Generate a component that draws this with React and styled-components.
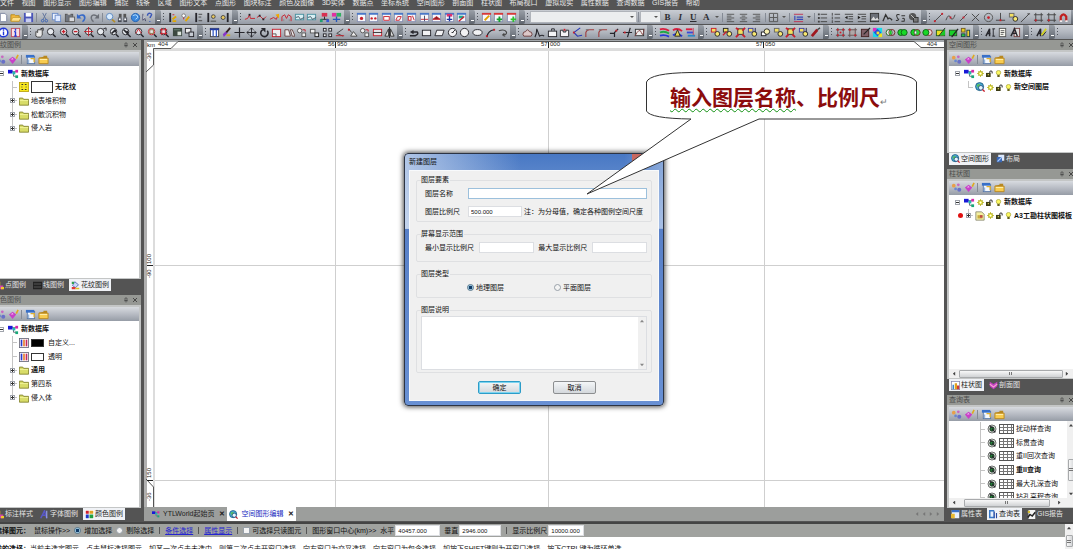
import React from "react";
import styled, { createGlobalStyle, css } from "styled-components";

const GlobalStyle = createGlobalStyle`
  * { box-sizing: border-box; }
  html, body { margin: 0; padding: 0; overflow: hidden; }
  body, button, input, select, textarea, legend {
    font-family: "Liberation Sans", "Noto Sans CJK SC", sans-serif;
    font-size: 7px;
    line-height: 8px;
    color: #111;
  }
  button { border: 0; padding: 0; background: none; }
`;

/* ---------- icons, all drawn on a 12 x 12 grid ---------- */

const K = "#26262c";
const R = "#c8202c";
const L = (d, stroke = K, w = 1, fill = "none") => <path d={d} stroke={stroke} strokeWidth={w} fill={fill} />;
const B = (x, y, w, h, fill, stroke) => <rect x={x} y={y} width={w} height={h} fill={fill} stroke={stroke} />;
const C = (x, y, r, fill, stroke, w = 1) => <circle cx={x} cy={y} r={r} fill={fill} stroke={stroke} strokeWidth={w} />;

const lens = (inner, c = K) => (<>{L("M7.5 8 10.5 11", K, 1.6)}{C(5, 5, 3.5, "#e6e9ee", c)}{inner}</>);
const win = (inner, head = "#4a78c8") => (<>{B(1.5, 1.5, 9, 9, "#f6f7fa", "#8a93b4")}{B(1, 1, 10, 2, head)}{inner}</>);
const shapes = (c) => (<>{B(1.5, 1.5, 5, 4, "#f4e060", c)}{C(8, 7.5, 2.6, "#f8e870", K)}</>);

const ICONS = {
  page: <>{L("M2.5 1.5h5l2 2v7h-7z", "#7c86a0", 1, "#fff")}</>,
  folder: <>{L("M1 3h4l1 1h4v6H1z", "#b98c1e", 1, "#f2b83c")}{L("M1 10 3 6h9l-2 4z", "#b98c1e", 0.6, "#ffe08a")}</>,
  save: <>{B(1, 1, 10, 10, "#4a55b8")}{B(3, 1, 6, 4, "#fff")}{B(3, 7, 6, 4, "#c8cdf0")}</>,
  cut: <>{L("M4 1 7.5 8M8 1 4.5 8", "#60749c")}{C(4, 9.5, 1.4, "none", "#3c64b4")}{C(8, 9.5, 1.4, "none", "#3c64b4")}</>,
  copy: <>{B(1.5, 1.5, 6, 7, "#eef4ff", "#6c8cc8")}{B(4.5, 3.5, 6, 7, "#dce8ff", "#6c8cc8")}</>,
  paste: <>{B(1.5, 2.5, 8, 8, "#707680", "#555")}{B(4, 1, 3, 2, "#ccc")}{B(5.5, 5.5, 6, 5, "#d8dade", "#666")}</>,
  undo: <>{L("M3 5C6 2 10 3 9.500 7 9 9 8 10 7 10.500", "#3468c8", 1.8)}{L("M1 2v5h5z", "none", 0, "#3468c8")}</>,
  redo: <>{L("M9 5C6 2 2 3 2.500 7 3 9 4 10 5 10.500", "#6a6e76", 1.5)}{L("M11 2v5H6z", "none", 0, "#6a6e76")}</>,
  zoom: <>{L("M7.5 8 11 11", "#b48c28", 1.8)}{C(5, 5, 3.5, "#d8ecff", "#5c88c0")}</>,
  binoc: <>{B(2, 2, 3, 4, "#555")}{B(7, 2, 3, 4, "#555")}{B(1, 6, 4, 5, "#4a4e58")}{B(7, 6, 4, 5, "#4a4e58")}{B(2, 7, 2, 2, "#fff")}{B(8, 7, 2, 2, "#fff")}</>,
  globe: <>{C(6, 6, 4.5, "#3c88dc", "#2460b0")}{L("M3 4q3-2 5 0t-2 4", "#bfe4ff")}</>,
  help: <>{L("M1 2v7l2-2 1 3", "#446", 1, "#fff")}{L("M6 4q0-3 3-2.500t0 4v1M8.500 10v1", "#3c58b8", 1.6)}</>,
  barY: <>{L("M3.500 1v10", K, 2)}{L("M6 8 10 5M6 10h4", "#e0a800", 2)}{L("M6 3h2", R)}</>,
  barKey: <>{C(4, 4, 2, "#fff", "#777")}{L("M6 10 10 5", "#e0a800", 2)}{L("M4 6v2", R)}</>,
  barB: <>{L("M3.500 1v10", K, 2)}{L("M6 2.500h4M6 5.500h3M6 9.500h4", "#444")}</>,
  barC: <>{L("M2.500 1v10", K, 2)}{C(8, 5, 2, "#e8c860", "#444")}{L("M5 10h6", "#444")}</>,
  barD: <>{L("M9.500 1v10", K, 2)}{C(4.500, 6, 2.200, "#e8c860", "#444")}</>,
  pl1: <>{L("M1 8 4 7 6 3 7 7h5", R)}{B(5, 2, 2, 2, K)}</>,
  pl2: <>{L("M1 6 4 4 8 8 11 5", R)}{B(3, 3, 2, 2, K)}{B(7, 7, 2, 2, K)}</>,
  plY: <>{L("M1 8 5 6 8 8 10 3", R)}{L("M7 3 11 2v5z", "none", 0, "#f0a800")}</>,
  plM: <>{L("M1 10V5l3-2 2 4 2-4 3 2v5", R)}{L("M3 10V8M9 10V8", "#888")}</>,
  winC: <>{B(1.5, 2.5, 9, 6, "#d8f0f4", "#4890a0")}{L("M2 6 5 5l2 3 4-2", "#456", 1)}</>,
  treeR: <>{B(3, 1, 6, 4, "#d83050")}{L("M6 5v3M2 10V8h8v2", K)}{B(1, 8, 3, 3, "#20a070")}{B(8, 8, 3, 3, "#3858d8")}</>,
  treeM: <>{B(1, 1, 5, 4, "#e030a0")}{B(6, 1, 5, 4, "#30b060")}{L("M6 5v6M6 8H2M6 8h4", "#2858b8", 1.5)}</>,
  w1: win(C(6, 7, 1.8, R)), w2: win(<>{C(4, 7, 1.300, R)}{C(8, 7, 1.300, R)}</>),
  w3: win(B(3, 5, 6, 4, "#fff", R)), w4: win(L("M3 9 5 5h4L7 9z", R)),
  w5: win(<>{B(2.5, 5, 3, 4, "none", R)}{L("M7 4 9 9", R)}</>), w6: win(<>{L("M2 8h8", R)}{L("M6 4v6", "#446")}</>),
  w7: win(<>{L("M2 8 6 5l4 3z", R, 1, "#822")}</>), w8: win(<>{B(3, 2, 6, 3, "#e0306c")}{L("M6 4v6M3 8h6", "#2038a0", 1.5)}</>),
  w9: win(<>{B(3, 4, 5, 3, "#20a890")}{L("M3 10 9 5", R, 1.500)}</>),
  c1: win(L("M4 9 9 4", "#e0a000", 2), "#d83838"), c2: win(<>{L("M7 5v6M4 8h6", "#18a030", 2)}</>, "#d83838"),
  c3: win(L("M8 5v6M5 8h6", "#30c030", 2), "#d83838"),
  al: L("M2 2.500h8M2 4.500h5M2 6.500h8M2 8.500h5M2 10.500h8", "#555"),
  ac: L("M2 2.500h8M4 4.500h4M2 6.500h8M4 8.500h4M2 10.500h8", "#555"),
  ar: L("M2 2.500h8M5 4.500h5M2 6.500h8M5 8.500h5M2 10.500h8", "#555"),
  grid: L("M1.500 1.500h9v9h-9zM6 2v8M2 6h8", "#555"),
  listB: <>{L("M1 2.500h10M1 10.500h10", "#c03050")}{L("M4 5.500h7M4 8h7M2 4v5", "#3848b8", 1.3)}</>,
  ul: <>{L("M4 2.500h7M4 6.500h7M4 10.500h7", "#444")}{L("M1 2.500h2M1 6.500h2M1 10.500h2", "#444", 2)}</>,
  ol: L("M5 2.500h6M5 6.500h6M5 10.500h6M2.500 1v3M2.500 5v3M2.500 9v3", "#444"),
  ind: <>{L("M2 2.500h9M6 5h5M6 7.500h5M2 10.500h9", "#444")}{L("M5 4v4L2 6z", "none", 0, "#222")}</>,
  outd: <>{L("M2 2.500h9M6 5h5M6 7.500h5M2 10.500h9", "#444")}{L("M2 4v4l3-2z", "none", 0, "#222")}</>,
  pic: <>{B(1.5, 1.5, 9, 9, "#6c7078", "#333")}{L("M2 9 5 5l2 3 2-2 2 3z", "none", 0, "#ddd")}</>,
  ch: L("M1 10 4 3 7 8M6 8q2-3 5 1", "#333", 1.4),
  ss: L("M5 3Q1 2 2 5t2 3q-1 2-3 1M7 4h4M8 7q3-1 2 3H7", "#333", 1.1),
  ball: <>{C(5, 5, 4, "#555")}{B(6, 6, 5, 5, "#777", "#333")}{L("M3 3 7 7", "#ccc")}</>,
  seg: <>{L("M2 10 10 2", "#444")}{B(1, 9, 2, 2, R)}{B(9, 1, 2, 2, R)}</>,
  wave: <>{L("M1 9Q4 1 6 6t5-3", "#444")}{B(5, 5, 2, 2, R)}</>,
  mid: <>{L("M2 10 10 2", "#444")}{B(5, 5, 2, 2, R)}</>,
  cross: <>{L("M2 2 10 10M10 2 2 10", "#444")}</>,
  ring: <>{C(6, 6, 4.5, "none", "#555")}{C(6, 6, 1.5, R)}</>,
  perp: <>{L("M6 1v8M1 9h10", "#444")}{B(5, 8, 2, 2, R)}</>,
  yel: shapes("#666"),
  slash: L("M1 11 10 2M8 2h3", "#444"),
  hash: <>{L("M3 1v10M9 1v10M1 3h10M1 9h10", "#444")}{B(2, 8, 2, 2, R)}</>,
  magnet: <>{L("M3 10V5q3-5 6 0v5", "#c02020", 2.4)}{L("M2 10h2.500M8 10h2.500", "#eee", 2)}</>,
  infoB: <>{C(6, 6, 4.7, "#fff", "#2038d8", 1.6)}{L("M6 5v4M6 2.500v1.500", "#2038d8", 1.5)}</>,
  infoR: <>{B(1.5, 1.5, 9, 9, "#f8e0e4", "#c05060")}{L("M6 5v5M6 2v2M4.500 5H6M4.500 10h3", "#2038d8", 1.5)}</>,
  hand: <>{L("M2 10V5l2 1V3h5v6l-2 2H4z", "#444", 1, "#e8e8e8")}{L("M7 2 10 1v3", K)}</>,
  zo: lens(null), zp: lens(L("M3 5h4M5 3v4", R, 1.5)), zm: lens(L("M3 5h4", R, 1.5)),
  z1: lens(L("M5 0v10M0 5h10", R)), z2: lens(L("M8 2l3-1v3", K)), z3: lens(L("M3 7 7 3M7 3v3", K, 1.8)),
  z4: lens(L("M3 3l4 4V4", K, 1.8)), z5: lens(L("M2 7 5 2l3 5", R)), z6: lens(L("M3 3h4v4H3z", "#8c7040", 1), R),
  z7: lens(L("M1 3h8M1 7h8M3 1v8M7 1v8", R)),
  scr: <>{B(1, 1, 10, 9, "#3c4840")}{B(6, 5, 4, 4, "#dce4dc")}{L("M2 3h7", "#6c8878")}</>,
  scr2: <>{B(1.5, 1.5, 6, 5, "#eee", K)}{B(5.5, 5.5, 5, 5, "#c8ccd4", K)}</>,
  table: <>{B(1.5, 1.5, 9, 9, "#fff", "#444")}{L("M1 2.500h10", "#2038a0", 2)}{L("M4.500 3v7M8 3v8", "#2850c0", 1.3)}</>,
  brush: <>{L("M5 7 10 1", "#302020", 2)}{L("M2 8 5 5 7 7 3 11z", "none", 0, "#8838c8")}{L("M6 9h4", "#d0b020", 2)}</>,
  plus: L("M6 0.500v11M0.500 6h11", K, 1.3),
  move: L("M6 1v10M1 6h10M4 3l2-2 2 2M4 9l2 2 2-2M3 4 1 6l2 2M9 4l2 2-2 2", K),
  rot: <>{L("M4 3a4 4 0 1 0 5 1", K, 1.7)}{L("M2 1h5v5z", "none", 0, K)}</>,
  scale: <>{B(1.5, 2.5, 9, 8, "#f0f0f2", R)}{L("M1.500 7.500h4v3", "#555")}</>,
  skew: <>{L("M1 10V3h4l2 7zM7 3h2l3 7H9z", "#644", 1, "#eee")}</>,
  two: <>{C(4, 4, 2.4, "#eee", "#555")}{B(6.500, 6.500, 4, 4, "#eee", "#555")}{L("M7 3h3v2", R)}</>,
  twoB: <>{B(1.5, 2.5, 5, 4, "#eee", "#555")}{B(6.500, 6.500, 4, 4, "#eee", "#222")}</>,
  four: <>{B(1.5, 1.5, 3, 3, "#eee", K)}{B(7.500, 1.5, 3, 3, "#eee", K)}{B(1.5, 7.500, 3, 3, "#eee", K)}{B(7.500, 7.500, 3, 3, "#eee", K)}</>,
  ang: <>{L("M10 2 3 7l7 3", "#444")}{L("M2 9.500h9", R)}</>,
  tri: <>{L("M2 2 5 6M4 10 7 5l4 5z", "#444", 1, "#eee")}{B(1, 2, 2, 2, R)}</>,
  rectR: <>{B(1.5, 2.5, 9, 7, "#e4e4e8", R)}{L("M1 6h10", "#333")}</>,
  mir: <>{L("M1 10 5 2v8zM11 10 7 2v8z", "#333", 1, "#ddd")}{L("M6 0v12", K)}</>,
  cur: <>{L("M1 9.500h6q4-2 2-4H4", K, 1.5)}{L("M1 5.500 5 3v5z", "none", 0, K)}</>,
  rc: B(1.5, 3.5, 9, 6, "#f2f2f4", K), para: L("M1 9.500 3 3.500h8l-2 6z", K, 1, "#f2f2f4"),
  circ: <>{C(6, 6, 4.5, "#f2f2f4", K)}{L("M6 6 9 3M5 6h2", K)}</>, circ2: C(6, 6, 4.5, "#f2f2f4", K),
  ell: <ellipse cx="6" cy="6" rx="5" ry="3.200" fill="#f2f2f4" stroke={K} />,
  arc: <>{L("M2 11Q3 4 10 3", K, 1.3)}{B(1, 9, 2, 2, R)}{B(9, 2, 2, 2, R)}</>, loop: L("M2 4q6-2 8 1t-4 4M6 9l2-2M6 9l3 1", "#444", 1.2),
  car: <>{L("M1 8q0-3 3-3 2-4 4 0 3 0 3 3l-1 2H2z", "#6c3c3c", 1, "#dcc8c8")}</>,
  spl: L("M1 11q2-3 2-9l3 8q3-2 5 0", K, 1.2),
  bx: <>{B(1.5, 4.500, 9, 6, "#f4f4f6", K)}{L("M5 4V2h3v2", K)}</>, bx2: <>{L("M1.500 3.500h3v2h3v-2h3v7h-9z", K, 1, "#f4f4f6")}{B(5, 2, 2, 2, R)}</>,
  diam: <>{L("M9 1 2 6l4 4 5-1", "#2838b8", 1.2)}{B(1, 5, 2, 2, R)}</>,
  cor: <>{L("M2 11V6q1-3 4-3h5", "#a04040", 1.2)}{L("M2 3h3", "#666")}</>,
  trim: <>{L("M1 7h5M6 11V6l4-4", K, 1.3)}{B(7, 3, 2, 2, R)}</>, ext: <>{L("M1 6h10M6 11 9 1", K, 1.3)}{B(2, 5, 2, 2, R)}</>,
  crv: <>{B(1.5, 2.500, 9, 7, "#eee", "#333")}{L("M1 10Q6 0 8 6t3-4", "#844")}</>,
  s1: <>{L("M1 2.500Q6 1 11 4", "#d82040", 2)}{L("M1 6Q6 4 11 7", "#20a848", 2)}{L("M1 9.500Q6 8 11 10.500", "#2838d8", 2)}</>,
  s2: <>{L("M1 3.500q5-3 10 1", "#d82040", 2)}{L("M1 9q5-3 10 1", "#2838d8", 2)}{L("M3 10 6 3l3 7z", "#222", 1, "#e8d850")}</>,
  s3: <>{L("M1 2.500h7", "#d82040", 2)}{L("M2 6h7", "#3848d8", 2)}{L("M3 9.500h8", "#2888c8", 2)}{L("M9 1v8", "#c84860")}</>,
  y1: shapes(R), y2: <>{shapes("#222")}{L("M1 9 5 5", R, 1.5)}</>, y3: <>{B(3, 2, 6, 6, "#f4e060", "#333")}{L("M1 1 4 3M11 1 8 4M1 11 4 8M11 11 8 8", R, 2)}</>,
  y4: <>{shapes("#4040a0")}{L("M9 1v5", "#224")}</>, y5: <>{B(1.500, 5.500, 5, 4, "#fff", "#222")}{C(7.500, 5, 3, "#f8f0b0", "#222")}</>,
  pen: <>{L("M2 10 8 3", "#a01820", 3)}{L("M8 3 11 1", "#444", 1.5)}</>,
  h1: <>{L("M3 1v10M9 1v10M1 3h10M1 9h10", "#555")}{B(2, 2, 2, 2, R)}{B(8, 2, 2, 2, R)}{B(2, 8, 2, 2, R)}{B(8, 8, 2, 2, R)}{B(5, 5, 2, 2, R)}</>,
  h2: <>{B(2, 2, 8, 8, "#b0a8a8")}{L("M3 1v10M9 1v10M1 3h10M1 9h10", "#655")}{B(2, 2, 2, 2, R)}{B(8, 8, 2, 2, R)}</>,
  h3: <>{B(1.500, 2.500, 8, 8, "#806068", "#422")}{L("M4 8 11 1", "#222", 1.3)}</>,
  rain: <>{B(1, 1, 10, 10, "#18d8e8")}{B(1, 1, 4, 4, "#e030c0")}{B(7, 7, 4, 4, "#f0e020")}{L("M6 2 10 6 6 10 2 6z", "none", 0, "#2050e0")}{B(5, 5, 3, 3, "#f8e030")}</>,
  v1: <>{C(4.500, 6, 3.300, "#e8f0e8", "#276627")}{C(7.500, 6, 3.300, "none", "#762727")}{L("M6 3.500q2.500 2.500 0 5-2.500-2.500 0-5z", "none", 0, "#18d028")}</>,
  v2: <>{C(4.200, 6, 3.300, "#18d828", "#145c18")}{C(7.800, 6, 3.300, "#18d828", "#145c18")}</>,
  v3: <>{C(4.200, 6, 3.300, "#18d828", "#145c18")}{C(7.800, 6, 3.300, "#28d838", "#762727")}{L("M6 3.500q2.500 2.500 0 5-2.500-2.500 0-5z", "#333", 0.5, "#fff")}</>,
  v4: <>{C(7.800, 6, 3.300, "#e8d8d8", "#8c3030")}{C(4.200, 6, 3.300, "#18d828", "#145c18")}</>,
  g1: <>{B(1.500, 3.500, 9, 6, "#e8e020", "#225c22")}{L("M5 9 11 2v7z", "none", 0, "#18c828")}{L("M4 10 11 1", "#222")}</>,
  g2: <>{B(1.500, 3.500, 8, 6, "#18d028", "#225c22")}{L("M4 11 11 2", "#222", 1.3)}</>,
  g3: <>{B(1.500, 1.500, 4, 4, "#e8d020", "#735c22")}{B(1.500, 7.500, 4, 3, "#20c840", "#244")}{B(7.500, 3.500, 3, 7, "#f0d030", "#244")}</>,
  a1: <>{L("M1 10 5 2v8M3 7h3", K, 1.600)}{L("M9 2v8M8 2h3M8 10h3", K)}</>, a2: <>{B(2.500, 1.500, 7, 9, "#f8f8f0", "#555")}{L("M4 4h4M4 6h4M4 8h3", "#555")}</>,
  a3: <>{B(4.500, 1.500, 6, 9, "#ddd", "#744")}{L("M1 10 5 2l3 8M3 7h4", K, 1.500)}</>, a4: <>{L("M1 10 5 2v8M3 7h3", K, 1.600)}{L("M6 9 11 2", "#d0d020", 2)}{L("M7 10 11 5", "#222")}</>,
  nodes: <>{L("M4 4h2v5h3M6 4h3", "#667")}{B(0, 2, 5, 4, "#1818d8")}{B(5, 4, 3, 3, "#20b8b0")}{B(8, 2, 3, 3, "#d828a8")}{B(8, 8, 3, 3, "#18a878")}</>,
  dots: <>{C(3, 4, 2, "#e8a048")}{C(8, 3, 1.500, "#c868c0")}{C(5, 7.500, 1.500, "#6888d0")}{C(9, 8.500, 2.200, "#6870c8")}</>,
  gem: <>{L("M5 3 9 6 5 11 1 6z", "none", 0, "#c840c8")}{L("M3 6 5 4 6 6z", "none", 0, "#f0b0f0")}{L("M9 5 11 1", "#e0a820", 1.800)}</>,
  sheet: <>{B(2.500, 2.500, 8, 8, "#f4f8ff", "#5878a8")}{B(1, 1, 9, 3, "#3870c8")}{L("M6 5h4v4", "#e0b030", 1.500)}{L("M4 6v4", "#78a0d0")}</>,
  gfold: <>{L("M1 4 6 3V2h4v3H1z", "none", 0, "#b88820")}{L("M1 4.500h10v6H1z", "#b88820", 1, "#f8cc50")}{L("M2 6h8", "#fff0b0")}</>,
  yfold: <>{L("M0.500 2.500h4l1 1.500h6v7h-11z", "#7c7c28", 1, "#d8dc68")}{L("M1 5.500h10", "#f4f8a0")}</>,
  ydots: <>{B(0.500, 0.500, 11, 11, "#f8e820", "#b8a010")}{L("M3 3h2M7 3h2M3 6h1M8 6h1M3 9h2M7 9h2", "#333", 1.200)}</>,
  cbars: <>{B(0.500, 0.500, 11, 11, "#fff", "#667")}{B(2, 2, 2, 8, "#2838c8")}{B(5, 2, 2, 8, "#e88030")}{B(8, 2, 2, 8, "#c02860")}</>,
  sun: <>{L("M6 0v12M0 6h12M2 2l8 8M10 2 2 10", "#c8c020", 1.4)}{C(6, 6, 3.600, "#f8f440", "#94901c", 1.200)}{C(6, 6, 1.500, "#fff")}</>,
  lock: <>{B(0, 5, 8, 7, "#3c3c14")}{L("M6.500 5V2.500q2-2 4 0V6", K, 1.700)}{B(3, 7, 2, 2, "#e8e060")}</>,
  bulb: <>{C(6, 4.500, 3.800, "#fcf860", "#94901c")}{B(4, 8.500, 4, 3.500, "#66621c")}</>,
  world: <>{C(5.500, 5.500, 4.800, "#48a8d8", "#1c5878")}{L("M2 4q3-3 5 0t-3 4z", "none", 0, "#58c060")}{C(7, 7, 2.800, "#e8f4fc", "#184880")}{L("M9 9 11.500 11.500", R, 1.600)}</>,
  eye: <>{C(6, 6, 4.800, "#e8f0e8", "#555")}{C(6, 6, 2.600, "#208838", "#111")}{L("M3 2 7 5M6 6 10 10", K, 1.300)}</>,
  column: <>{B(0.500, 0.500, 11, 11, "#fff", "#88a")}{B(2, 5, 2, 6, "#3888d0")}{B(5, 3, 3, 8, "#e0a020")}{B(8, 6, 3, 5, "#d03838")}</>,
  template: <>{L("M1 1h7l3 3v7H1z", "#887", 1, "#f4f0a0")}{B(3, 5, 6, 4, "#c8a840")}{B(6, 5, 3, 3, "#c04848")}</>,
  heart: <>{L("M1 1 6 4 11 1V7L6 11 1 7z", "none", 0, "#c040c0")}{L("M1 4 6 8 11 4", "#f8a0d0", 1.500)}</>,
  layout: <>{B(3, 1, 8, 8, "#dce8fc")}{B(1, 4, 7, 7, "#3868b8")}{L("M2 10 8 4", "#a8c8f8", 1.500)}</>,
  pal: <>{B(0, 0, 12, 12, "#fff")}{B(1, 1, 4, 4, "#d02030")}{B(6, 1, 5, 4, "#e0a020")}{B(1, 6, 4, 5, "#2038c8")}{B(6, 6, 5, 5, "#20a040")}</>,
  fill: <>{L("M5 1 10 5 6 9 2 6z", "#3858a8", 1, "#c8d8f8")}{B(1, 8, 5, 3, "#e03838")}{B(6, 9, 5, 2, "#e0c020")}{B(1, 1, 3, 3, "#30a050")}</>,
  point: <>{B(1, 1, 6, 6, "#f0c828")}{B(5, 6, 6, 5, "#d048a8")}{B(8, 8, 4, 3, "#f0c828")}</>,
  dark: <>{B(0, 1, 12, 10, "#222")}{L("M1 4h10M1 8h10", "#666")}</>,
  fontA: <>{L("M1 11 6 1l3 10M3 7h5", "#5858c8", 2)}{L("M9 1v10", "#98a0e8", 1.500)}</>,
  search: <>{B(0, 0, 7, 11, "#3878c8")}{B(2, 2, 4, 7, "#e8f0fc")}{L("M7 2v9M10 4v7", "#2848a0", 1.500)}</>,
  report: <>{B(2, 0, 9, 12, "#f4f4f4")}{L("M1 10 4 6l3 2 4-5", "#222", 2)}{B(1, 1, 3, 3, "#d8c030")}</>,
  props: <>{B(1, 0, 10, 11, "#e8f0fc")}{B(1, 0, 10, 3, "#3870c8")}{B(0, 5, 5, 6, "#e8b830")}</>,
  pin: L("M4 2h4v5H4zM2 7.500h8M6 7v4", "#444", 1.300),
  close: L("M2 2 10 10M10 2 2 10", "#333", 1.600),
};

const Svg = styled.svg`
  display: block;
  flex: none;
  width: ${(p) => p.$s}px;
  height: ${(p) => p.$s}px;
  overflow: hidden;
`;
const Icon = ({ name, size = 11 }) => (
  <Svg $s={size} viewBox="0 0 12 12" aria-hidden="true">{ICONS[name]}</Svg>
);

/* ---------- frame ---------- */

const Page = styled.div`
  display: flex;
  flex-direction: column;
  width: 100%;
  height: 100vh;
  overflow: hidden;
  background: #545454;
`;

const MenuBar = styled.nav`
  display: flex;
  flex: none;
  justify-content: space-between;
  width: 700px;
  height: 10px;
  overflow: hidden;
`;
const MenuItem = styled.button`
  flex: none;
  height: 6px;
  line-height: 6px;
  color: #e8e8e8;
  white-space: nowrap;
`;

const ToolRow = styled.div`
  display: flex;
  flex: none;
  height: 14px;
  margin-bottom: 1px;
  margin-left: -3px;
  overflow: hidden;
  background: #9ba0a8;
`;
const Group = styled.div`
  display: flex;
  flex: none;
  align-items: center;
  width: ${(p) => p.$w}px;
  height: 14px;
  background: linear-gradient(#c9cdd3, #b2b7bf 50%, #959ba5);
`;
const Grip = styled.span`
  flex: none;
  width: 5px;
  height: 8px;
  background: repeating-linear-gradient(#50545c 0 1px, transparent 1px 3px) 2px 0 / 1px 8px no-repeat;
`;
const Cap = styled.span`
  flex: none;
  align-self: stretch;
  width: 6px;
  margin-left: 1px;
  border-radius: 0 2px 2px 0;
  background:
    linear-gradient(#fff, #fff) 2px 10px / 3px 1px no-repeat,
    linear-gradient(#9aa0a8, #60666f);
`;
const Items = styled.div`
  display: flex;
  flex: 1;
  align-items: center;
  justify-content: space-around;
  min-width: 0;
`;
const ToolButton = styled.button`
  display: grid;
  place-items: center;
  width: ${(p) => (p.$narrow ? 7 : 12)}px;
  height: 12px;
`;
const Divider = styled.span`
  flex: none;
  width: 1px;
  height: ${(p) => p.$h || 9}px;
  margin: 0 1px;
  background: ${(p) => p.$c || "#858b95"};
`;
const Glyph = styled.span`
  font: ${(p) => (p.$italic ? "italic " : "")}bold 9px/10px "Liberation Serif", serif;
  text-decoration: ${(p) => (p.$under ? "underline" : "none")};
  color: #2c2c30;
`;
const Caret = styled.i`
  border: 2px solid transparent;
  border-top-color: #555;
  border-bottom: 0;
`;
const Combo = styled.span`
  position: relative;
  display: flex;
  flex: none;
  width: ${(p) => p.$w}px;
  height: 12px;
  border: 1px solid #b0b4ba;
  background: #eceeef;
  select { width: 100%; appearance: none; border: 0; background: none; outline: 0; }
  i { position: absolute; right: 2px; top: 4px; }
`;

const Tool = ({ name }) => {
  if (name === "|") return <Divider />;
  if (name === "v") return <ToolButton $narrow aria-label="more"><Caret /></ToolButton>;
  if ("BIUA".includes(name))
    return <ToolButton><Glyph $italic={name === "I"} $under={name === "U"}>{name}</Glyph></ToolButton>;
  return <ToolButton aria-label={name}><Icon name={name} /></ToolButton>;
};
const ToolGroup = ({ w, icons, grip = true, children }) => (
  <Group $w={w}>
    {grip && <Grip />}
    {children}
    <Items>{icons.split(" ").filter(Boolean).map((n, i) => <Tool key={i} name={n} />)}</Items>
    <Cap />
  </Group>
);

const Workspace = styled.div`
  display: grid;
  grid-template-columns: 141px minmax(0, 1fr) 126px;
  gap: 3px;
  flex: 1;
  min-height: 0;
`;

/* ---------- docked panels ---------- */

const Dock = styled.aside`
  display: flex;
  flex-direction: column;
  min-width: 0;
  min-height: 0;
  margin-left: ${(p) => (p.$side === "left" ? -9 : 0)}px;
  margin-right: ${(p) => (p.$side === "right" ? -4 : 0)}px;
`;
const PanelBox = styled.section`
  display: flex;
  flex-direction: column;
  flex: ${(p) => p.$grow} 1 0;
  min-height: 0;
`;
const PanelTitle = styled.header`
  display: flex;
  flex: none;
  align-items: center;
  height: 10px;
  padding: 0 3px 0 2px;
  gap: 3px;
  background: #969894;
  color: #4c4c4c;
  span { flex: 1; }
`;
const PanelBody = styled.div`
  display: flex;
  flex-direction: column;
  flex: 1;
  min-height: 0;
  border: 2px solid #c4c6c6;
  border-bottom-width: 1px;
`;
const PanelTools = styled.div`
  display: flex;
  flex: none;
  align-items: center;
  gap: 1px;
  height: 14px;
  padding-left: 1px;
  background: linear-gradient(#d8dbe0, #b8bcc4 50%, #969ca6);
`;
const TreeArea = styled.div`
  display: flex;
  flex: 1;
  min-height: 0;
  overflow: hidden;
  background: #fff;
`;
const Tree = styled.ul`
  display: grid;
  flex: 1;
  grid-auto-rows: 1fr;
  align-self: flex-start;
  min-width: 0;
  height: ${(p) => p.$h}px;
  margin: 0;
  padding: 1px 0 0 ${(p) => p.$indent || 3}px;
  list-style: none;
  overflow: hidden;
`;
const TreeRow = styled.li`
  display: flex;
  align-items: center;
  gap: 2px;
  min-width: 0;
  padding-left: ${(p) => (p.$child ? 11 : 0)}px;
  font-weight: ${(p) => (p.$bold ? 700 : 400)};
  white-space: nowrap;
  position: relative;
`;
const Branch = styled.span`
  display: grid;
  place-items: center;
  flex: none;
  align-self: stretch;
  width: 10px;
  ${(p) => p.$child && css`
    background:
      linear-gradient(#c4c4c4, #c4c4c4) 5px 0 / 1px ${p.$last ? "50%" : "100%"} no-repeat,
      linear-gradient(#c4c4c4, #c4c4c4) 5px 50% / 5px 1px no-repeat;
  `}
`;
const Expander = styled.button`
  width: 5px;
  height: 5px;
  border: 1px solid #a0a4ac;
  background: linear-gradient(#333, #333) ${(p) => (p.$open ? "0 1px / 3px 1px" : "1px 0 / 1px 3px")} no-repeat,
    linear-gradient(#333, #333) 0 1px / 3px 1px no-repeat, #fff;
`;
const Swatch = styled.span`
  flex: none;
  width: ${(p) => p.$w}px;
  height: ${(p) => p.$h}px;
  margin-right: ${(p) => p.$mr || 0}px;
  border: 1px solid #333;
  background: ${(p) => p.$c};
`;
const TableMark = styled.span`
  flex: none;
  width: 15px;
  height: 10px;
  border: 1px solid #555;
  background:
    repeating-linear-gradient(90deg, transparent 0 3px, #777 3px 4px),
    repeating-linear-gradient(#fff 0 2px, #777 2px 3px);
`;
const RedDot = styled.span`
  position: absolute;
  left: 6px;
  width: 5px;
  height: 5px;
  border-radius: 50%;
  background: #e01010;
`;

const Tabs = styled.div`
  display: flex;
  flex: none;
  align-items: flex-start;
  gap: 3px;
  height: ${(p) => p.$h || 16}px;
  padding-left: 2px;
`;
const Tab = styled.button`
  display: flex;
  flex: none;
  align-items: center;
  gap: 1px;
  height: 12px;
  padding: 0 2px;
  white-space: nowrap;
  color: ${(p) => (p.$on ? "#222" : "#e4e4e4")};
  background: ${(p) => (p.$on ? "#f0f2f6" : "none")};
`;

const ScrollTrack = styled.div`
  display: flex;
  flex: none;
  flex-direction: ${(p) => (p.$v ? "column" : "row")};
  align-items: center;
  justify-content: space-between;
  ${(p) => (p.$v ? "width: 8px; padding: 2px 0;" : "height: 9px; padding: 0 6px 0 3px;")}
  background: #f0f0f0;
`;
const Thumb = styled.span`
  display: grid;
  place-items: center;
  flex: none;
  margin-top: ${(p) => p.$offset || 0}px;
  ${(p) => (p.$v ? `width: 7px; height: ${p.$len}px;` : `height: 8px; width: ${p.$len}px;`)}
  border: 1px solid #a8aaac;
  border-radius: 1px;
  background: ${(p) => (p.$v ? "linear-gradient(90deg, #f8f8f8, #d4d6d8)" : "linear-gradient(#f8f8f8, #d0d2d4)")};
  &::after {
    content: "";
    width: 4px;
    height: 3px;
    background: repeating-linear-gradient(${(p) => (p.$v ? "0deg" : "90deg")}, #777 0 1px, transparent 1px 2px);
  }
`;
const Arrow = styled.i`
  flex: none;
  width: 4px;
  height: 4px;
  background: ${(p) => p.$c || "#444"};
  clip-path: polygon(${(p) => ({
    up: "50% 20%, 100% 80%, 0 80%",
    down: "0 20%, 100% 20%, 50% 80%",
    left: "20% 50%, 80% 0, 80% 100%",
    right: "80% 50%, 20% 0, 20% 100%",
  }[p.$d])});
`;

const Panel = ({ title, grow, tabs, tabsHeight, after, children }) => (
  <PanelBox $grow={grow}>
    <PanelTitle><span>{title}</span><Icon name="pin" size={6} /><Icon name="close" size={6} /></PanelTitle>
    <PanelBody>
      <PanelTools>
        <Tool name="dots" /><Tool name="gem" /><Divider /><Tool name="sheet" /><Tool name="gfold" />
      </PanelTools>
      <TreeArea>{children}</TreeArea>
      {after}
    </PanelBody>
    <Tabs $h={tabsHeight} role="tablist">
      {tabs.map(([icon, label, on]) => (
        <Tab key={label} role="tab" $on={on}><Icon name={icon} size={9} />{label}</Tab>
      ))}
    </Tabs>
  </PanelBox>
);

const Row = ({ icon, label, child, open, closed, last, bold, mark, dot, status }) => (
  <TreeRow $child={child} $bold={bold}>
    {dot && <RedDot />}
    <Branch $child={child} $last={last}>
      {(open || closed) && <Expander $open={open} aria-label="toggle" />}
    </Branch>
    <Icon name={icon} size={icon === "nodes" ? 11 : 10} />
    {status && <><Icon name="sun" size={7} /><Icon name="lock" size={7} /><Icon name="bulb" size={7} /></>}
    {mark}
    <span>{label}</span>
  </TreeRow>
);

/* ---------- drawing area ---------- */

const Center = styled.main`
  display: flex;
  flex-direction: column;
  min-width: 0;
  min-height: 0;
`;
const Canvas = styled.div`
  position: relative;
  flex: 1;
  min-height: 0;
  overflow: hidden;
  background: #fff;
`;
const Sheet = styled.svg`
  display: block;
  width: 100%;
  height: 100%;
  text { font-size: 6px; fill: #222; }
`;
const DocTabs = styled.div`
  display: flex;
  flex: none;
  align-items: center;
  height: 14px;
  margin-bottom: 1px;
  padding-left: 6px;
  background: #9c9e9c;
`;
const DocTab = styled.button`
  display: flex;
  align-items: center;
  gap: 3px;
  height: 14px;
  padding: 0 2px;
  white-space: nowrap;
  color: ${(p) => (p.$on ? "#2028c0" : "#222")};
  background: ${(p) => (p.$on ? "#fff" : "none")};
  b { margin-left: 2px; color: #222; }
`;
const DocNav = styled.div`
  display: flex;
  gap: 3px;
  margin-left: auto;
  padding-right: 4px;
`;

const Sheets = () => (
  <Sheet>
    <rect width="100%" height="2" fill="#a4a8ac" />
    <rect width="3" height="100%" fill="#b0b0b0" />
    <path d="M191.500 8v500M404.500 8v500M620.500 8v500M9 225.500h800M9 440.500h800" stroke="#cfcfcf" />
    <rect x="9" y="8" width="100%" height="3" fill="#dcdcdc" />
    <rect x="9" y="8" width="2" height="100%" fill="#dcdcdc" />
    <path d="M9.500 25V8.500H27L34 1.500H770L777 7.500H800M9.500 25 2 32M2 439l7.500 8V480" stroke="#555" fill="none" />
    <path d="M191.500 2v6M404.500 2v6M619.500 2v6M3 225.500h6M3 440.500h6" stroke="#222" />
    <text x="3" y="7">km</text><text x="14" y="6">404</text>
    <text x="184" y="6">56</text><text x="193" y="6">950</text>
    <text x="397" y="6">57</text><text x="406" y="6">000</text>
    <text x="612" y="6">57</text><text x="621" y="6">050</text>
    <text x="783" y="6">404</text>
    <text transform="translate(7 21) rotate(-90)">-36</text>
    <text transform="translate(7 224) rotate(-90)">100</text>
    <text transform="translate(7 238) rotate(-90)">-90</text>
    <text transform="translate(7 438) rotate(-90)">150</text>
    <text transform="translate(7 461) rotate(-90)">-36</text>
  </Sheet>
);

/* ---------- new-layer dialog ---------- */

const Dialog = styled.form`
  position: absolute;
  left: 260px;
  top: 113px;
  width: 260px;
  border: 1px solid #2c3444;
  border-radius: 4px;
  padding: 0 4px 4px;
  background:
    linear-gradient(90deg, rgba(220, 230, 245, 0.7), transparent 45%, transparent 85%, rgba(220, 230, 245, 0.4)) 0 0 / 100% 75px no-repeat,
    linear-gradient(#4878c4, #88a8dc 74px, #5880c8 75px, #6890d4);
  box-shadow: 0 0 5px 1px rgba(0, 0, 0, 0.7);
`;
const DialogTitle = styled.div`
  display: flex;
  justify-content: space-between;
  height: 16px;
  line-height: 16px;
`;
const CloseButton = styled.button`
  width: 25px;
  height: 8px;
  margin-right: 2px;
  border-radius: 0 0 2px 2px;
  background: #c86860;
`;
const DialogBody = styled.div`
  display: flex;
  flex-direction: column;
  gap: 8px;
  padding: 5px 6px 6px;
  border: 1px solid #f8fafc;
  background: #f0f0f0;
`;
const FieldSet = styled.fieldset`
  display: flex;
  flex-direction: column;
  gap: 7px;
  min-width: 0;
  margin: 0;
  padding: ${(p) => p.$pad || "4px 4px 4px 8px"};
  border: 1px solid #dfe0e2;
  border-radius: 2px;
  legend { margin-left: ${(p) => (p.$flush ? 0 : -4)}px; padding: 0 1px 0 0; height: 8px; }
`;
const FieldRow = styled.div`
  display: flex;
  align-items: center;
  height: 11px;
  white-space: nowrap;
  justify-content: ${(p) => p.$justify || "flex-start"};
  gap: ${(p) => p.$gap || 2}px;
  padding-right: ${(p) => p.$pr || 0}px;
`;
const FieldLabel = styled.label`
  flex: none;
  width: ${(p) => (p.$w ? `${p.$w}px` : "auto")};
`;
const TextBox = styled.input`
  flex: ${(p) => (p.$w ? "none" : 1)};
  width: ${(p) => (p.$w ? `${p.$w}px` : "auto")};
  min-width: 0;
  height: 11px;
  padding: 0 2px;
  border: 1px solid ${(p) => (p.$focus ? "#9cc0dc" : "#dcdee2")};
  background: #fff;
  font-size: 6px;
  outline: 0;
`;
const Check = styled.input`
  flex: none;
  appearance: none;
  width: 7px;
  height: 7px;
  margin: 0;
  border: 1px solid #98a0a8;
  border-radius: ${(p) => (p.type === "radio" ? "50%" : "0")};
  background: #f4f4f4;
  &:checked { background: radial-gradient(#103c68 40%, #a8d4ec 60%); border-color: #58788c; }
`;
const RadioLabel = styled.label`
  display: flex;
  align-items: center;
  gap: 2px;
`;
const NoteBox = styled.div`
  display: flex;
  height: 54px;
  border: 1px solid #dcdee2;
  background: #fff;
  textarea { flex: 1; min-width: 0; border: 0; padding: 2px; resize: none; outline: 0; overflow: hidden; background: #fff; }
`;
const Actions = styled.div`
  display: flex;
  justify-content: center;
  gap: 32px;
  padding-left: 6px;
`;
const ActionButton = styled.button`
  width: 43px;
  height: 13px;
  border: 1px solid ${(p) => (p.$main ? "#2c9cc8" : "#8c8e90")};
  border-radius: 2px;
  background: linear-gradient(#f4f6f8, #d4d8dc);
  box-shadow: ${(p) => (p.$main ? "inset 0 0 0 1px #7cd4f0" : "none")};
`;

const LayerDialog = () => (
  <Dialog onSubmit={(e) => e.preventDefault()}>
    <DialogTitle><span>新建图层</span><CloseButton type="button" aria-label="关闭" /></DialogTitle>
    <DialogBody>
      <FieldSet>
        <legend>图层要素</legend>
        <FieldRow><FieldLabel $w={41} htmlFor="name">图层名称</FieldLabel><TextBox id="name" $focus /></FieldRow>
        <FieldRow>
          <FieldLabel $w={41} htmlFor="scale">图层比例尺</FieldLabel>
          <TextBox id="scale" $w={54} defaultValue="500.000" />
          <span>注：为分母值，确定各种图例空间尺度</span>
        </FieldRow>
      </FieldSet>
      <FieldSet $pad="4px 4px 8px 8px">
        <legend>屏幕显示范围</legend>
        <FieldRow $justify="space-between" $gap={1}>
          <FieldLabel htmlFor="min">最小显示比例尺</FieldLabel><TextBox id="min" $w={55} />
          <FieldLabel htmlFor="max">最大显示比例尺</FieldLabel><TextBox id="max" $w={55} />
        </FieldRow>
      </FieldSet>
      <FieldSet>
        <legend>图层类型</legend>
        <FieldRow $justify="center" $gap={50} $pr={14}>
          <RadioLabel><Check type="radio" name="kind" defaultChecked />地理图层</RadioLabel>
          <RadioLabel><Check type="radio" name="kind" />平面图层</RadioLabel>
        </FieldRow>
      </FieldSet>
      <FieldSet $pad="2px 4px 2px 4px" $flush>
        <legend><label htmlFor="note">图层说明</label></legend>
        <NoteBox>
          <textarea id="note" />
          <ScrollTrack $v><Arrow $d="up" $c="#888" /><Arrow $d="down" $c="#888" /></ScrollTrack>
        </NoteBox>
      </FieldSet>
      <Actions><ActionButton $main>确定</ActionButton><ActionButton type="button">取消</ActionButton></Actions>
    </DialogBody>
  </Dialog>
);

const Callout = styled.div`
  position: absolute;
  left: 442px;
  top: 31px;
  width: 332px;
  height: 126px;
  svg { position: absolute; inset: 0; width: 332px; height: 126px; }
  p {
    position: relative;
    margin: 0;
    padding: 10px 0 0 84px;
    font: bold 21px/30px "Noto Sans CJK SC", sans-serif;
    color: #8b0c0c;
    white-space: nowrap;
  }
  u { text-decoration: underline wavy #109010 1px; text-underline-offset: 3px; }
  small { font-size: 9px; font-weight: 400; color: #777; }
`;

/* ---------- status area ---------- */

const StatusBar = styled.footer`
  display: flex;
  flex: none;
  height: 27px;
  background: #fff;
  border-top: 2px solid #444;
`;
const StatusText = styled.div`
  flex: 1;
  min-width: 0;
  overflow: hidden;
`;
const StatusRow = styled.div`
  display: flex;
  align-items: center;
  gap: 4px;
  height: 13px;
  margin-left: -5px;
  background: #a0a29f;
  white-space: nowrap;
  a { color: #2424d0; }
`;
const Pair = styled.label`
  display: flex;
  align-items: center;
  gap: ${(p) => p.$gap || 1}px;
`;
const Message = styled.p`
  margin: 8px 0 0 -12px;
  white-space: nowrap;
`;

const MENU = "文件 视图 图形显示 图形编辑 捕捉 线条 区域 图形文本 点图形 图块标注 颜色及图像 3D实体 数据点 坐标系统 空间图形 剖面图 柱状图 布局视口 虚拟现实 属性数据 查询数据 GIS报告 帮助".split(" ");
const QUERIES = ["扰动样查询", "标贯查询", "重II回次查询", "重II查询", "最大孔深查询", "钻孔高程查询"];

export default function App() {
  return (
    <Page>
      <GlobalStyle />
      <MenuBar>{MENU.map((m) => <MenuItem key={m}>{m}</MenuItem>)}</MenuBar>
      <ToolRow>
        <ToolGroup w={164} grip={false} icons="page folder save | cut copy paste undo redo | zoom binoc globe help" />
        <ToolGroup w={77} icons="barY barKey barB barC barD" />
        <ToolGroup w={112} icons="pl1 pl2 plY plM winC winC treeR treeM" />
        <ToolGroup w={125} icons="w1 w2 w3 w4 w5 w6 w7 w8 w9" />
        <ToolGroup w={50} icons="c1 c2 c3" />
        <ToolGroup w={402} icons="B I U A v | al ac ar | grid v | listB v | ul ol ind outd pic ch ss ball">
          <Combo $w={107}><select aria-label="字体" /><Caret /></Combo>
          <Divider $h={10} />
          <Combo $w={21}><select aria-label="字号" /><Caret /></Combo>
        </ToolGroup>
        <ToolGroup w={150} icons="seg wave mid cross ring perp yel slash hash hash magnet" />
      </ToolRow>
      <ToolRow>
        <ToolGroup w={31} grip={false} icons="infoB infoR" />
        <ToolGroup w={175} icons="hand zo zp zm z1 z2 z3 z4 z5 z6 z7 scr scr2" />
        <ToolGroup w={200} icons="table brush plus move rot scale skew two twoB four ang tri two rectR mir" />
        <ToolGroup w={113} icons="cur rc para circ circ2 ell arc loop" />
        <ToolGroup w={137} icons="car spl bx bx2 diam cor cor trim ext crv" />
        <ToolGroup w={51} icons="s1 s2 s3" />
        <ToolGroup w={125} icons="y1 y2 y3 y4 y5 yel y3 y4 pen" />
        <ToolGroup w={150} icons="h1 h2 h3 rain v1 v2 v3 v4 g1 g2 g3" />
        <ToolGroup w={50} icons="a1 a2 a3" />
        <ToolGroup w={26} icons="a4" />
        <ToolGroup w={40} icons="" />
      </ToolRow>

      <Workspace>
        <Dock $side="left">
          <Panel title="花纹图例" grow={256} tabs={[["point", "点图例"], ["dark", "线图例"], ["fill", "花纹图例", true]]}>
            <Tree $h={69}>
              <Row icon="nodes" label="新数据库" open bold />
              <Row icon="ydots" label="无花纹" child bold mark={<Swatch $w={22} $h={12} $c="#fff" />} />
              <Row icon="yfold" label="地表堆积物" child closed />
              <Row icon="yfold" label="松散沉积物" child closed />
              <Row icon="yfold" label="侵入岩" child closed last />
            </Tree>
          </Panel>
          <Panel title="颜色图例" grow={227} tabsHeight={14} tabs={[["point", "标注样式"], ["fontA", "字体图例"], ["pal", "颜色图例", true]]}>
            <Tree $h={83}>
              <Row icon="nodes" label="新数据库" open bold />
              <Row icon="cbars" label="自定义..." child mark={<Swatch $w={13} $h={8} $mr={2} $c="#000" />} />
              <Row icon="cbars" label="透明" child mark={<Swatch $w={13} $h={8} $mr={2} $c="#fff" />} />
              <Row icon="yfold" label="通用" child closed bold />
              <Row icon="yfold" label="第四系" child closed />
              <Row icon="yfold" label="侵入体" child closed last />
            </Tree>
          </Panel>
        </Dock>

        <Center>
          <Canvas>
            <Sheets />
            <LayerDialog />
            <Callout>
              <svg viewBox="0 0 332 126" aria-hidden="true">
                <path
                  d="M60.500 11Q64 2 105 1.500H285Q326 2 330.500 11V40Q326 47.500 285 48H173L1 123 105 48Q64 47.500 60.500 40Z"
                  fill="#fff" stroke="#333"
                />
              </svg>
              <p><u>输入图层名称</u>、比例尺<small>↵</small></p>
            </Callout>
          </Canvas>
          <DocTabs>
            <DocTab><Icon name="nodes" size={8} />YTLWorld起始页<b>✕</b></DocTab>
            <DocTab $on><Icon name="world" size={9} />空间图形编辑<b>✕</b></DocTab>
            <DocNav><Arrow $d="left" $c="#777" /><Arrow $d="left" $c="#777" /><Arrow $d="right" $c="#777" /><Arrow $d="right" $c="#777" /></DocNav>
          </DocTabs>
        </Center>

        <Dock $side="right">
          <Panel title="空间图形" grow={129} tabs={[["world", "空间图形", true], ["layout", "布局"]]}>
            <Tree $h={28}>
              <Row icon="nodes" label="新数据库" open bold status />
              <Row icon="world" label="新空间图层" child last bold status />
            </Tree>
          </Panel>
          <Panel
            title="柱状图" grow={227} tabs={[["column", "柱状图", true], ["heart", "剖面图"]]}
            after={<ScrollTrack><Arrow $d="left" /><Thumb $len={104} /><Arrow $d="right" /></ScrollTrack>}
          >
            <Tree $h={28}>
              <Row icon="nodes" label="新数据库" open bold status />
              <Row icon="template" label="A3工勘柱状图模板" child closed last bold dot status />
            </Tree>
          </Panel>
          <Panel
            title="查询表" grow={127} tabsHeight={14} tabs={[["props", "属性表"], ["search", "查询表", true], ["report", "GIS报告"]]}
            after={<ScrollTrack><Arrow $d="left" /><Thumb $len={86} /><Arrow $d="right" /><span /></ScrollTrack>}
          >
            <Tree $h={83} $indent={15}>
              {QUERIES.map((q, i) => (
                <Row key={q} icon="eye" label={q} child bold={i === 3} mark={<TableMark />} />
              ))}
            </Tree>
            <ScrollTrack $v><Arrow $d="up" /><Thumb $v $len={22} $offset={20} /><Arrow $d="down" /></ScrollTrack>
          </Panel>
        </Dock>
      </Workspace>

      <StatusBar>
        <StatusText>
          <StatusRow>
            <b>选择图元：</b>
            <span>鼠标操作&gt;&gt;</span>
            <Pair $gap={3}><Check type="radio" name="mode" defaultChecked />增加选择</Pair>
            <Pair $gap={3}><Check type="radio" name="mode" />剔除选择</Pair>
            <Divider $c="#555" $h={7} /><a href="#cond">条件选择</a>
            <Divider $c="#555" $h={7} /><a href="#attr">属性显示</a>
            <Divider $c="#555" $h={7} />
            <Pair $gap={2}><Check type="checkbox" />可选择只读图元</Pair>
            <Divider $c="#555" $h={7} /><span>图形窗口中心(km)&gt;&gt;</span>
            <Pair>水平<TextBox $w={45} defaultValue="40457.000" /></Pair>
            <Pair>垂直<TextBox $w={42} defaultValue="2946.000" /></Pair>
            <Divider $c="#555" $h={7} />
            <Pair>显示比例尺<TextBox $w={36} defaultValue="10000.000" /></Pair>
          </StatusRow>
          <Message>
            <b>当前的选择：</b>当前未选定图元，点击鼠标选择图元，如某一次点击未选中，则第二次点击开窗口选择。向右窗口为交叉选择，向左窗口为包含选择，如按下SHIFT键则为开窗口选择，按下CTRL键为循环单选
          </Message>
        </StatusText>
        <ScrollTrack $v><Arrow $d="up" /><Thumb $v $len={12} /></ScrollTrack>
      </StatusBar>
    </Page>
  );
}
